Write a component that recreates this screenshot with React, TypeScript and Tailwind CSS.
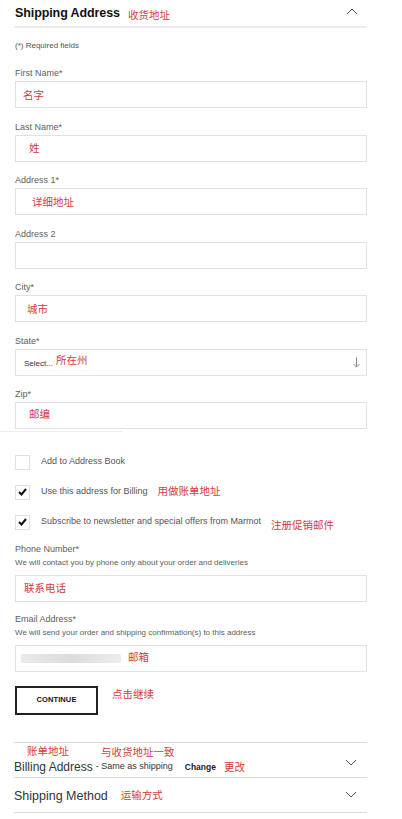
import React from "react";

const red = "text-[#d43c3c] text-[10.5px] font-['Noto_Sans_CJK_SC',sans-serif]";

function ChevronUp() {
  return (
    <svg width="12" height="7" viewBox="0 0 12 7" fill="none" stroke="#555" strokeWidth="1">
      <polyline points="1,6 6,1 11,6" />
    </svg>
  );
}

function ChevronDown() {
  return (
    <svg width="12" height="7" viewBox="0 0 12 7" fill="none" stroke="#555" strokeWidth="1">
      <polyline points="1,1 6,6 11,1" />
    </svg>
  );
}

function Check() {
  return (
    <svg width="9" height="8" viewBox="0 0 9 8" fill="none" stroke="#111" strokeWidth="2">
      <polyline points="1,4 3.5,6.5 8,1" />
    </svg>
  );
}

function Field({
  label,
  note,
  mb = "mb-[12.5px]",
  children,
}: {
  label: string;
  note?: string;
  mb?: string;
  children?: React.ReactNode;
}) {
  return (
    <div className={mb}>
      <div className="h-[12px] text-[9px] leading-[12px] text-[#606060]">{label}</div>
      {note && <div className="mt-[2px] h-[12px] text-[8px] leading-[12px] text-[#606060]">{note}</div>}
      <div className={`${note ? "mt-[6px]" : "mt-[2px]"} h-[27px] border border-[#e2e2e2] flex items-center`}>
        {children}
      </div>
    </div>
  );
}

function CheckRow({ checked, text, note, noteClass }: { checked: boolean; text: string; note?: string; noteClass?: string }) {
  return (
    <div className="flex items-center h-[15px] mb-[15px]">
      <div className="w-[15px] h-[15px] border border-[#e0e0e0] flex items-center justify-center">
        {checked && <Check />}
      </div>
      <span className="ml-[11px] text-[9px] text-[#555]">{text}</span>
      {note && <span className={`${red} ${noteClass}`}>{note}</span>}
    </div>
  );
}

export default function App() {
  return (
    <div className="w-[402px] min-h-[819px] bg-white font-['Liberation_Sans',Arial,sans-serif]">
      <div className="ml-[14px] w-[353px]">
        <div className="h-[28px] flex items-center border-b-2 border-[#ececec] pl-[1px] pr-[9px]">
          <span className="text-[12.5px] font-bold text-[#111] tracking-[-0.1px]">Shipping Address</span>
          <span className={`${red} ml-[8px] mt-[3px]`}>收货地址</span>
          <div className="ml-auto mb-[4px]">
            <ChevronUp />
          </div>
        </div>

        <div className="pl-[1px]">
          <div className="mt-[12px] h-[12px] text-[8px] leading-[12px] text-[#555]">(*) Required fields</div>
          <div className="mt-[15px]">
            <Field label="First Name*">
              <span className={`${red} ml-[7px]`}>名字</span>
            </Field>
            <Field label="Last Name*">
              <span className={`${red} ml-[13px]`}>姓</span>
            </Field>
            <Field label="Address 1*">
              <span className={`${red} ml-[16px]`}>详细地址</span>
            </Field>
            <Field label="Address 2" />
            <Field label="City*">
              <span className={`${red} ml-[11px]`}>城市</span>
            </Field>
            <Field label="State*">
              <span className="ml-[8px] mt-[3px] text-[8px] text-[#333]">Select...</span>
              <span className={`${red} ml-[3px] mb-[4px]`}>所在州</span>
              <svg className="ml-auto mr-[6px]" width="7" height="11" viewBox="0 0 7 11" fill="none" stroke="#888" strokeWidth="1">
                <line x1="3.5" y1="0.5" x2="3.5" y2="10" />
                <polyline points="0.5,7 3.5,10 6.5,7" />
              </svg>
            </Field>
            <Field label="Zip*">
              <span className={`${red} ml-[13px] mb-[4px]`}>邮编</span>
            </Field>
          </div>
        </div>
      </div>
      <div className="-mt-[11px] w-[122px] h-[1px] bg-[#ececec]" />

      <div className="ml-[15px] w-[352px]">
        <div className="mt-[23px]">
          <CheckRow checked={false} text="Add to Address Book" />
          <CheckRow checked text="Use this address for Billing" note="用做账单地址" noteClass="ml-[10px] -mt-[2px]" />
          <CheckRow checked text="Subscribe to newsletter and special offers from Marmot" note="注册促销邮件" noteClass="ml-[10px] mt-[6px]" />
        </div>

        <div className="-mt-[2px]">
          <Field label="Phone Number*" note="We will contact you by phone only about your order and deliveries" mb="mb-[11px]">
            <span className={`${red} ml-[8px]`}>联系电话</span>
          </Field>
          <Field label="Email Address*" note="We will send your order and shipping confirmation(s) to this address" mb="mb-[14px]">
            <div className="ml-[5px] w-[100px] h-[9px] bg-gradient-to-r from-[#eaeaea] via-[#dcdcdc] to-[#ededed] rounded-[2px]" />
            <span className={`${red} ml-[7px] mb-[3px]`}>邮箱</span>
          </Field>
        </div>

        <div className="flex items-center">
          <button className="w-[83px] h-[29px] border-2 border-[#222] text-[7.5px] font-bold text-[#111] tracking-[0.1px]">
            CONTINUE
          </button>
          <span className={`${red} ml-[14px] mb-[12px]`}>点击继续</span>
        </div>
      </div>

      <div className="ml-[14px] w-[353px] mt-[27px]">
        <div className="relative h-[36px] flex items-center border-t border-b border-[#dcdcdc] pr-[10px]">
          <span className={`${red} absolute left-[13px] top-[0px]`}>账单地址</span>
          <span className={`${red} absolute left-[87px] top-[1px]`}>与收货地址一致</span>
          <span className="mt-[14px] text-[12px] text-[#333]">Billing Address</span>
          <span className="mt-[15px] ml-[3px] text-[9px] text-[#333]">- Same as shipping</span>
          <span className="mt-[15px] ml-[12px] text-[8.5px] font-bold text-[#222]">Change</span>
          <span className={`${red} mt-[15px] ml-[8px]`}>更改</span>
          <div className="ml-auto mt-[6px]">
            <ChevronDown />
          </div>
        </div>
        <div className="h-[35px] flex items-center border-b border-[#dcdcdc] pr-[10px]">
          <span className="mt-[3px] text-[12.5px] text-[#333]">Shipping Method</span>
          <span className={`${red} ml-[13px]`}>运输方式</span>
          <div className="ml-auto">
            <ChevronDown />
          </div>
        </div>
      </div>
    </div>
  );
}
